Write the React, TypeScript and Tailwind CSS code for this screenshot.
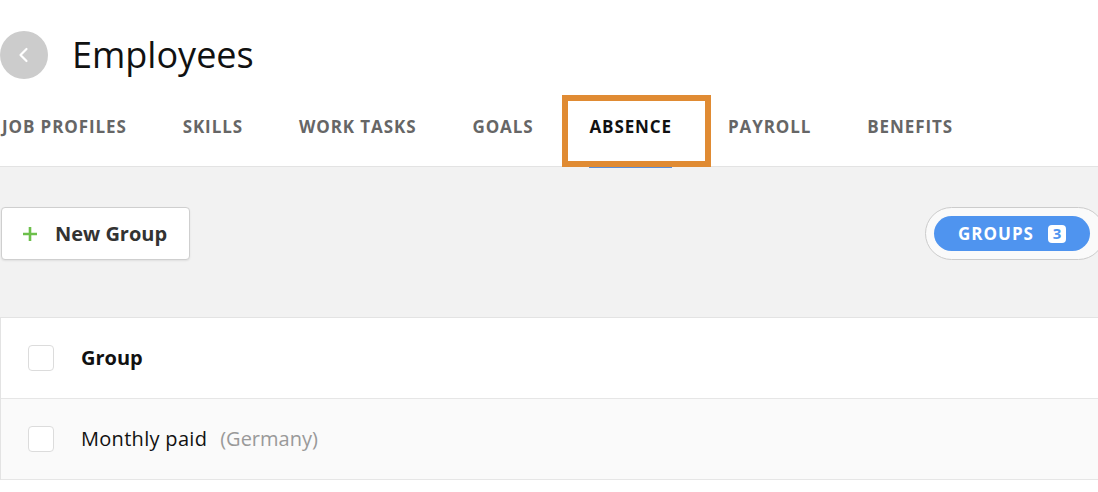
import React from "react";

const tabs = ["JOB PROFILES", "SKILLS", "WORK TASKS", "GOALS", "ABSENCE", "PAYROLL", "BENEFITS"];

export default function App() {
  const active = "ABSENCE";

  return (
    <div className="w-[1098px] h-[492px] overflow-hidden bg-white font-['Open_Sans',sans-serif]">
      <div className="flex items-center h-[95px] pt-[15px]">
        <button className="w-12 h-12 rounded-full bg-[#cccccc] flex items-center justify-center">
          <svg width="20" height="20" viewBox="0 0 20 20" fill="none">
            <path d="M12.5 4 L6.5 10 L12.5 16" stroke="white" strokeWidth="2.2" strokeLinecap="round" strokeLinejoin="round" />
          </svg>
        </button>
        <h1 className="ml-6 text-[36px] text-[#111] leading-none">Employees</h1>
      </div>

      <div className="relative flex h-[72px] border-b border-[#e3e3e3] -ml-[26px]">
        {tabs.map((t) => (
          <div key={t} className="relative px-7 pt-[20px]">
            <span
              className={
                "text-[17px] leading-[22px] tracking-[0.9px] font-bold " +
                (t === active ? "text-[#111]" : "text-[#666]")
              }
            >
              {t}
            </span>
            {t === active && (
              <>
                <div className="absolute left-7 right-7 -bottom-[2px] h-[3px] bg-[#5b8fd9]" />
                <div className="absolute left-[1px] -right-[11px] top-0 -bottom-[1px] border-[6px] border-[#e08b33]" />
              </>
            )}
          </div>
        ))}
      </div>

      <div className="bg-[#f2f2f2] pt-10 pb-[57px] flex items-center justify-between">
        <button className="ml-[1px] w-[189px] h-[53px] flex items-center bg-white border border-[#cfcfcf] rounded-[4px] shadow-[0_1px_2px_rgba(0,0,0,0.08)]">
          <svg className="ml-[20px]" width="16" height="16" viewBox="0 0 16 16">
            <path d="M8 1 V15 M1 8 H15" stroke="#6cbf4b" strokeWidth="2.6" />
          </svg>
          <span className="ml-[17px] text-[20px] font-bold text-[#333]">New Group</span>
        </button>
        <div className="w-[180px] h-[53px] -mr-[7px] bg-[#fafafa] border border-[#cccccc] rounded-full flex items-center pl-[8px]">
          <div className="h-[35px] w-[156px] rounded-full bg-[#4f94ef] flex items-center pl-[24px]">
            <span className="text-white text-[17px] tracking-[1px] font-bold">GROUPS</span>
            <span className="ml-[14px] w-[18px] h-[18px] rounded-[4px] bg-white text-[#4f94ef] text-[15px] font-bold flex items-center justify-center">
              3
            </span>
          </div>
        </div>
      </div>

      <div className="bg-white border-t border-l border-[#e3e3e3] ml-0">
        <div className="flex items-center h-[81px] border-b border-[#e6e6e6]">
          <div className="ml-[27px] w-[26px] h-[26px] rounded-[4px] border border-[#dcdcdc] bg-white" />
          <span className="ml-[27px] text-[20px] font-bold text-[#111]">Group</span>
        </div>
        <div className="flex items-center h-[81px] bg-[#fafafa] border-b border-[#e6e6e6]">
          <div className="ml-[27px] w-[26px] h-[26px] rounded-[4px] border border-[#dcdcdc] bg-white" />
          <span className="ml-[27px] text-[20px] tracking-[0.3px] text-[#111]">Monthly paid</span>
          <span className="ml-[13px] text-[20px] text-[#999]">(Germany)</span>
        </div>
      </div>
    </div>
  );
}
